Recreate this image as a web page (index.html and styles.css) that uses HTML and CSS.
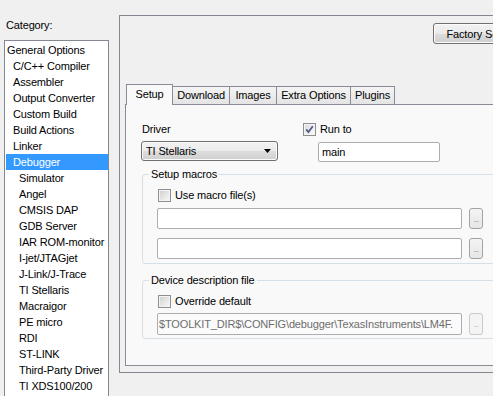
FILE: index.html
```html
<!DOCTYPE html>
<html lang="en">
<head>
  <meta charset="UTF-8">
  <title>Options</title>
  <link rel="stylesheet" href="styles.css">
</head>
<body>

  <div class="window">

    <div class="sidebar">
      <div class="cat-label">Category:</div>
      <ul class="cat-list">
        <li class="lvl0">General Options</li>
        <li class="lvl1">C/C++ Compiler</li>
        <li class="lvl1">Assembler</li>
        <li class="lvl1">Output Converter</li>
        <li class="lvl1">Custom Build</li>
        <li class="lvl1">Build Actions</li>
        <li class="lvl1">Linker</li>
        <li class="lvl1 selected">Debugger</li>
        <li class="lvl2">Simulator</li>
        <li class="lvl2">Angel</li>
        <li class="lvl2">CMSIS DAP</li>
        <li class="lvl2">GDB Server</li>
        <li class="lvl2">IAR ROM-monitor</li>
        <li class="lvl2">I-jet/JTAGjet</li>
        <li class="lvl2">J-Link/J-Trace</li>
        <li class="lvl2">TI Stellaris</li>
        <li class="lvl2">Macraigor</li>
        <li class="lvl2">PE micro</li>
        <li class="lvl2">RDI</li>
        <li class="lvl2">ST-LINK</li>
        <li class="lvl2">Third-Party Driver</li>
        <li class="lvl2">TI XDS100/200</li>
      </ul>
    </div>

    <div class="panel">
      <div class="panel-top">
        <button class="btn factory">Factory Settings</button>
      </div>

      <div class="tabs">
        <div class="tab active" style="width:47px">Setup</div>
        <div class="tab" style="width:58px">Download</div>
        <div class="tab" style="width:48px">Images</div>
        <div class="tab" style="width:75px">Extra Options</div>
        <div class="tab" style="width:45px">Plugins</div>
      </div>

      <div class="tab-body">
        <div class="top-row">
          <div class="driver">
            <div class="label">Driver</div>
            <div class="combo">
              <span>TI Stellaris</span>
              <svg class="arrow" width="7" height="4" viewBox="0 0 7 4"><polygon points="0,0 7,0 3.5,4" fill="#000"/></svg>
            </div>
          </div>
          <div class="runto">
            <div class="check">
              <span class="box checked">
                <svg width="11" height="11" viewBox="0 0 11 11"><path d="M2.2 5.4 L4.4 8 L8.8 2.2" fill="none" stroke="#4d6185" stroke-width="1.8"/></svg>
              </span>Run to
            </div>
            <div class="field runto-field">main</div>
          </div>
        </div>

        <fieldset class="group macros">
          <legend>Setup macros</legend>
          <div class="group-inner">
            <div class="check"><span class="box"></span>Use macro file(s)</div>
            <div class="file-row first">
              <div class="field wide"></div>
              <div class="dots">...</div>
            </div>
            <div class="file-row second">
              <div class="field wide"></div>
              <div class="dots">...</div>
            </div>
          </div>
        </fieldset>

        <fieldset class="group device">
          <legend>Device description file</legend>
          <div class="group-inner">
            <div class="check"><span class="box"></span>Override default</div>
            <div class="file-row first">
              <div class="field wide disabled">$TOOLKIT_DIR$\CONFIG\debugger\TexasInstruments\LM4F.</div>
              <div class="dots disabled">...</div>
            </div>
          </div>
        </fieldset>
      </div>
    </div>

  </div>

</body>
</html>
```

FILE: styles.css
```css
body {
  margin: 0;
  background-color: #f0f0f0;
  font-family: "Liberation Sans", Arial, sans-serif;
  font-size: 11px;
  letter-spacing: -0.15px;
  color: #000;
  overflow: hidden;
}

.window {
  display: flex;
  width: 493px;
  height: 396px;
  overflow: hidden;
}

/* left category tree */

.sidebar {
  flex: none;
  width: 119px;
  padding: 17px 0 0 4px;
  box-sizing: border-box;
}

.cat-label {
  line-height: 16px;
  padding-left: 2px;
}

.cat-list {
  list-style: none;
  margin: 7px 0 0;
  padding: 1px 0 0;
  width: 105px;
  height: 370px;
  box-sizing: border-box;
  border: 1px solid #828790;
  border-bottom: none;
  background-color: #fff;
}

.cat-list li {
  height: 16px;
  line-height: 16px;
  margin-left: 1px;
  white-space: nowrap;
}

.cat-list .lvl0 { padding-left: 1px; }
.cat-list .lvl1 { padding-left: 7px; }
.cat-list .lvl2 { padding-left: 13px; }

.cat-list .selected {
  background-color: #3399ff;
  color: #fff;
}

/* right side */

.panel {
  flex: none;
  width: 400px;
  height: 358px;
  margin-top: 15px;
  border: 1px solid #828790;
  box-sizing: border-box;
}

.panel-top {
  padding: 7px 0 0 313px;
}

.btn {
  font-family: inherit;
  font-size: 11px;
  letter-spacing: -0.15px;
  color: #000;
  border: 1px solid #707070;
  border-radius: 3px;
  background: linear-gradient(#f2f2f2 0%, #ebebeb 50%, #dddddd 51%, #cfcfcf 100%);
  box-shadow: inset 0 0 0 1px #fcfcfc;
  padding: 0;
}

.factory {
  display: block;
  width: 104px;
  height: 21px;
  white-space: nowrap;
}

.tabs {
  display: flex;
  align-items: flex-start;
  height: 20px;
  margin: 40px 0 0 6px;
  position: relative;
  z-index: 1;
}

.tab {
  flex: none;
  height: 18px;
  margin-top: 2px;
  margin-right: -1px;
  box-sizing: border-box;
  border: 1px solid #898c95;
  border-bottom: none;
  background: linear-gradient(#f4f4f4, #e4e4e4);
  text-align: center;
  line-height: 17px;
  white-space: nowrap;
}

.tab.active {
  height: 21px;
  margin-top: 0;
  background: #f9f9f9;
  line-height: 19px;
  position: relative;
  z-index: 2;
}

.tab-body {
  width: 380px;
  height: 262px;
  margin-left: 5px;
  box-sizing: border-box;
  border: 1px solid #898c95;
  background-color: #f9f9f9;
  padding-top: 16px;
}

.top-row {
  display: flex;
  padding-left: 15px;
}

.driver {
  width: 137px;
  margin-right: 25px;
}

.driver .label {
  line-height: 16px;
  padding-left: 1px;
}

.combo {
  display: flex;
  align-items: center;
  justify-content: space-between;
  height: 20px;
  margin-top: 4px;
  padding: 0 6px 0 4px;
  box-sizing: border-box;
  border: 1px solid #707070;
  border-radius: 3px;
  background: linear-gradient(#f2f2f2 0%, #ebebeb 50%, #dddddd 51%, #cfcfcf 100%);
  box-shadow: inset 0 0 0 1px #fafafa;
}

.check {
  display: flex;
  align-items: center;
  height: 16px;
  white-space: nowrap;
}

.box {
  flex: none;
  width: 13px;
  height: 13px;
  margin-right: 4px;
  box-sizing: border-box;
  border: 1px solid #8e8f8f;
  background: linear-gradient(135deg, #d0d0d0, #f8f8f8);
  box-shadow: inset 0 0 0 1px #f4f4f4;
  display: flex;
  align-items: center;
  justify-content: center;
}

.box.checked {
  background: linear-gradient(135deg, #dcdcdc, #fdfdfd);
}

.field {
  height: 20px;
  box-sizing: border-box;
  border: 1px solid #abadb3;
  border-radius: 2px;
  background-color: #fff;
  line-height: 18px;
  padding-left: 3px;
  white-space: nowrap;
  overflow: hidden;
}

.runto-field {
  width: 122px;
  margin: 5px 0 0 15px;
}

.group {
  margin: 5px 0 0 16px;
  padding: 6px 0 4px;
  width: 360px;
  box-sizing: border-box;
  border: 1px solid #d5dfe5;
  border-radius: 3px;
}

.group legend {
  margin-left: 6px;
  padding: 0 2px;
  line-height: 14px;
}

.group-inner {
  padding-left: 14px;
}

.group-inner .check {
  padding-left: 1px;
}

.file-row {
  display: flex;
  gap: 7px;
}

.file-row.first { margin-top: 5px; }
.file-row.second { margin-top: 9px; }

.field.wide {
  width: 305px;
  height: 21px;
}

.dots {
  flex: none;
  width: 14px;
  height: 21px;
  box-sizing: border-box;
  border: 1px solid #a3a3a3;
  border-radius: 3px;
  background: linear-gradient(#f4f4f4, #e6e6e6);
  color: #7a7a7a;
  font-size: 8px;
  line-height: 22px;
  text-align: center;
  letter-spacing: -0.5px;
}

.group.device {
  margin-top: 9px;
  padding-bottom: 3px;
}

.device .file-row.first { margin-top: 4px; }

.device .field.wide {
  height: 22px;
  line-height: 20px;
  padding-left: 1px;
  color: #6d6d6d;
  background-color: #fbfbfb;
  text-overflow: clip;
}

.dots.disabled {
  height: 22px;
  border-color: #c9c9c9;
  background: #f4f4f4;
  color: #a8a8a8;
}
```
